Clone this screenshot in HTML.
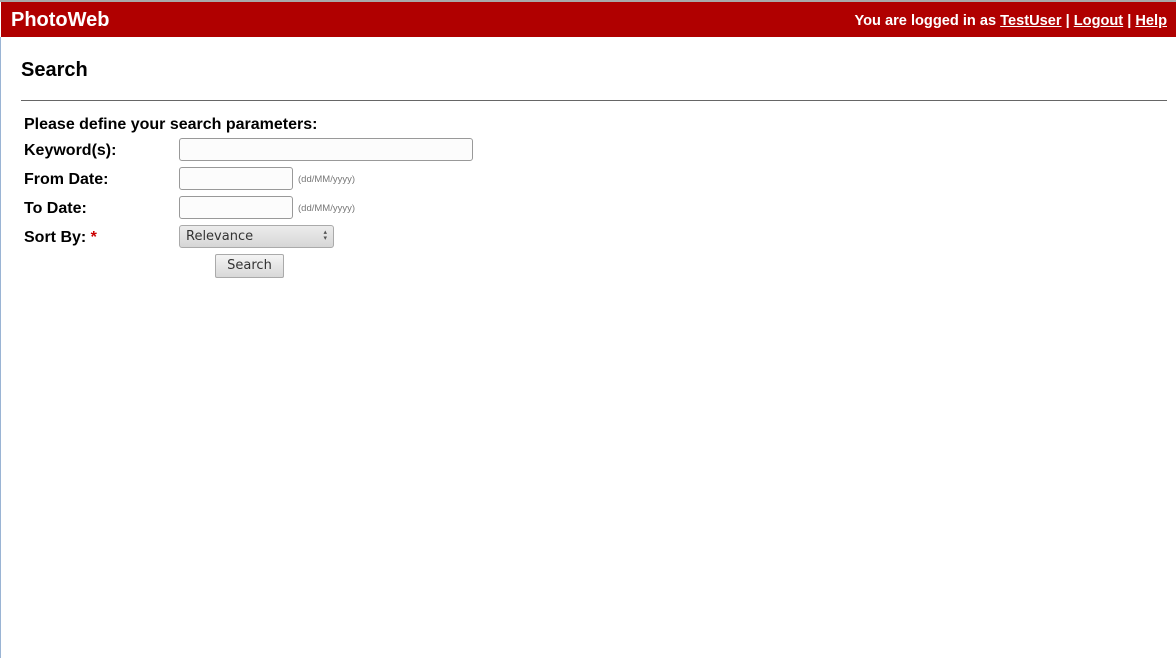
<!DOCTYPE html>
<html><head><meta charset="utf-8"><style>
body{margin:0;width:1176px;height:658px;position:relative;background:#fff;font-family:"Liberation Sans",Arial,sans-serif;overflow:hidden}
.top{position:absolute;left:0;top:0;width:1176px;height:2px;background:#a9a9a9}
.hdr{position:absolute;left:1px;top:2px;width:1175px;height:35px;background:#b00000;color:#fff;font-weight:bold}
.logo{position:absolute;left:10px;top:7px;font-size:20px}
.right{position:absolute;right:9px;top:11px;font-size:14.6px}
.lb{position:absolute;left:0;top:37px;width:1px;height:621px;background:#9ab4d4}
.h1{position:absolute;left:21px;top:59px;font-size:20px;font-weight:bold}
.hr{position:absolute;left:21px;top:100px;width:1146px;height:1px;background:#666}
.t{position:absolute;font-size:16px;font-weight:bold;color:#000}
.in{position:absolute;box-sizing:border-box;border:1px solid #999;border-radius:3px;background:#fcfcfc}
.hint{position:absolute;font-family:"Liberation Sans",sans-serif;font-size:9.5px;color:#777}
.sel{position:absolute;left:179px;top:225px;width:155px;height:23px;box-sizing:border-box;border:1px solid #aaa;border-radius:3px;background:linear-gradient(#ececec,#d6d6d6);font-family:"DejaVu Sans",sans-serif;font-size:13px;color:#333;padding:3px 0 0 6px}
.btn{position:absolute;left:215px;top:254px;width:69px;height:24px;box-sizing:border-box;border:1px solid #aaa;border-radius:2px;background:linear-gradient(#f4f4f4,#d8d8d8);font-family:"DejaVu Sans",sans-serif;font-size:13px;color:#333;text-align:center;padding-top:3px}
</style></head><body>
<div class="top"></div>
<div class="hdr"><div class="logo">PhotoWeb</div><div class="right">You are logged in as <u>TestUser</u> | <u>Logout</u> | <u>Help</u></div></div>
<div class="lb"></div>
<div class="h1">Search</div>
<div class="hr"></div>
<div class="t" style="left:24px;top:116px">Please define your search parameters:</div>
<div class="t" style="left:24px;top:142px">Keyword(s):</div>
<div class="in" style="left:179px;top:138px;width:294px;height:23px"></div>
<div class="t" style="left:24px;top:171px">From Date:</div>
<div class="in" style="left:179px;top:167px;width:114px;height:23px"></div>
<div class="hint" style="left:298px;top:174px">(dd/MM/yyyy)</div>
<div class="t" style="left:24px;top:200px">To Date:</div>
<div class="in" style="left:179px;top:196px;width:114px;height:23px"></div>
<div class="hint" style="left:298px;top:203px">(dd/MM/yyyy)</div>
<div class="t" style="left:24px;top:229px">Sort By: <span style="color:#c00">*</span></div>
<div class="sel">Relevance<span style="position:absolute;right:6px;top:3px;font-size:7px;line-height:6px;color:#555">▴<br>▾</span></div>
<div class="btn">Search</div>
</body></html>
